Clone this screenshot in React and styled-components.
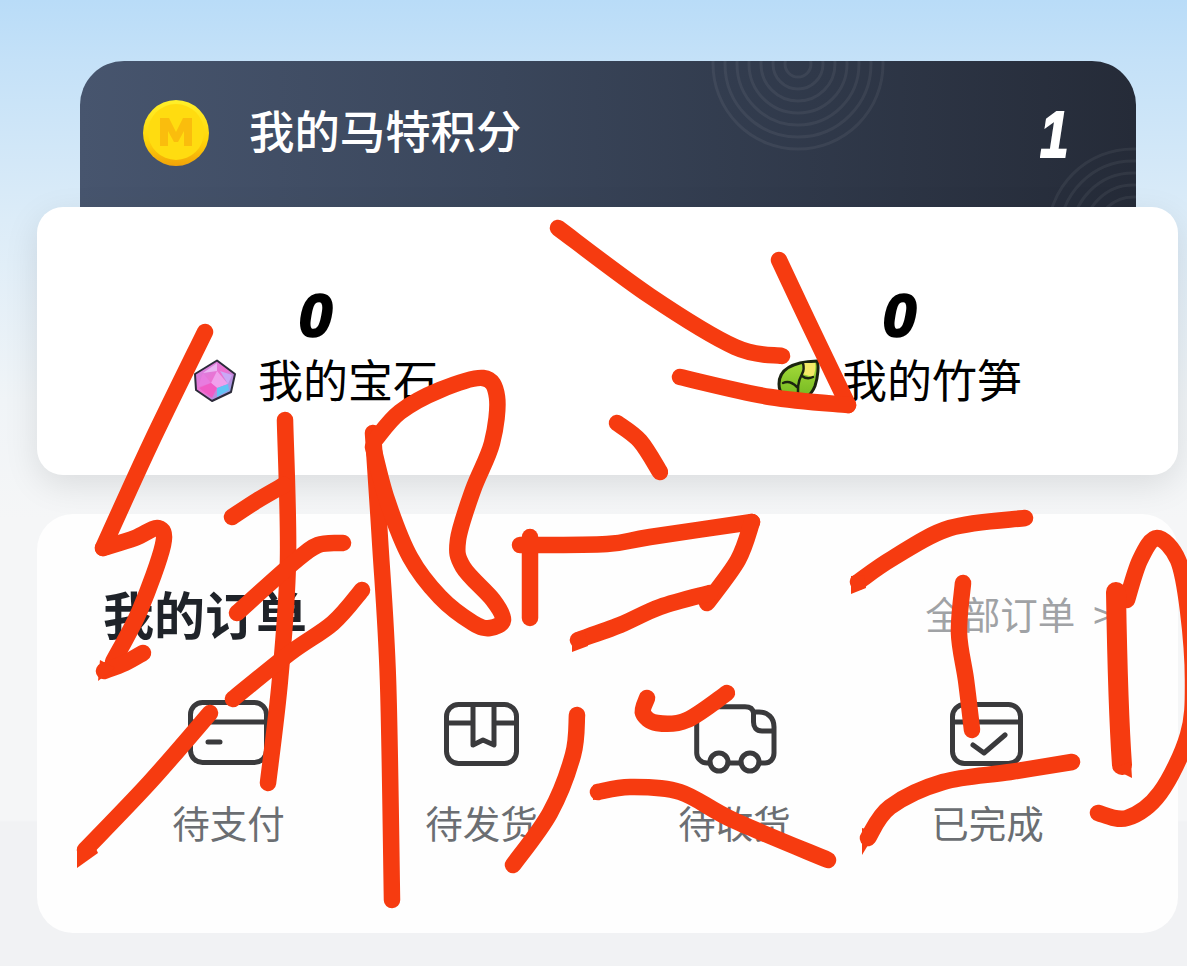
import React from "react";
import styled, { createGlobalStyle } from "styled-components";

const Global = createGlobalStyle`
  html, body { margin: 0; padding: 0; background: #f1f2f4; }
  * { box-sizing: border-box; }
`;

const Page = styled.div`
  position: relative;
  width: 1187px;
  height: 966px;
  overflow: hidden;
  padding-top: 61px;
  font-family: "Noto Sans CJK SC", "Liberation Sans", sans-serif;
  background: linear-gradient(
    180deg,
    #b9dcf8 0,
    #c4e1f8 60px,
    #dcecf8 220px,
    #f0f4f7 400px,
    #f5f6f7 520px,
    #f5f6f7 820px,
    #f1f2f4 822px
  );
`;

const PointsCard = styled.section`
  position: relative;
  display: flex;
  align-items: center;
  height: 146px;
  margin: 0 51px 0 80px;
  padding: 0 66px 14px 63px;
  border-radius: 44px 44px 0 0;
  overflow: hidden;
  background: linear-gradient(90deg, #47556e 0%, #3a465b 40%, #252b38 100%);
`;

const Rings = styled.svg`
  position: absolute;
  left: ${(p) => p.$left}px;
  top: ${(p) => p.$top}px;
  width: ${(p) => p.$size}px;
  height: ${(p) => p.$size}px;
`;

const CoinMark = styled.svg`
  flex: none;
  margin-top: 12px;
`;

const PointsTitle = styled.h2`
  flex: 1;
  margin: 3px 0 0 40px;
  font-size: 45.4px;
  line-height: 60px;
  font-weight: 500;
  color: #fff;
`;

const Score = styled.span`
  display: block;
  font-family: "Liberation Sans", sans-serif;
  font-style: italic;
  font-weight: 700;
  font-size: 60px;
  line-height: 66px;
  color: ${(p) => p.$color};
  -webkit-text-stroke: ${(p) => p.$stroke}px ${(p) => p.$color};
`;

const PointsScore = styled(Score)`
  font-size: 64px;
  margin: 15px 1px 0 0;
  transform: scaleX(0.8);
  transform-origin: right center;
`;

const StatsCard = styled.section`
  position: relative;
  z-index: 1;
  display: grid;
  grid-template-columns: 1fr 1fr;
  column-gap: 43px;
  height: 268px;
  margin: 0 9px 39px 37px;
  padding: 76px 8px 0;
  border-radius: 26px;
  background: #fff;
  box-shadow: 0 10px 34px rgba(0, 0, 0, 0.1);
`;

const Stat = styled.div`
  display: flex;
  flex-direction: column;
  align-items: center;
`;

const StatLabelRow = styled.div`
  display: flex;
  align-items: center;
  gap: 21px;
  margin-top: 4px;
`;

const StatIcon = styled.svg`
  flex: none;
`;

const StatLabel = styled.span`
  margin-top: -4px;
  font-size: 45px;
  line-height: 60px;
  color: #000;
`;

const OrdersCard = styled.section`
  position: relative;
  z-index: 2;
  height: 419px;
  margin: 0 9px 0 37px;
  padding: 65px 64px 0 65px;
  border-radius: 36px;
  background: #fefefe;
`;

const OrdersHeader = styled.header`
  display: flex;
  align-items: center;
  justify-content: space-between;
  height: 68px;
  padding-left: 1px;
`;

const OrdersTitle = styled.h3`
  margin: 0;
  font-size: 51px;
  line-height: 68px;
  font-weight: 700;
  color: #1f2329;
`;

const AllOrders = styled.span`
  font-size: 37.5px;
  line-height: 50px;
  color: #a0a2a5;
`;

const Chevron = styled.span`
  margin-left: 18px;
`;

const OrderGrid = styled.div`
  display: grid;
  grid-template-columns: repeat(4, 1fr);
  margin-top: 51px;
`;

const OrderItem = styled.div`
  display: flex;
  flex-direction: column;
  align-items: center;
  gap: 25px;
`;

const OrderIcon = styled.svg`
  display: block;
  width: 84px;
  height: 74px;
  overflow: visible;
  fill: none;
  stroke: #3a3a3c;
  stroke-width: 5;
  stroke-linecap: round;
  stroke-linejoin: round;
`;

const OrderLabel = styled.span`
  font-size: 37.5px;
  line-height: 50px;
  color: #6b6e72;
`;

const Scribble = styled.svg`
  position: absolute;
  z-index: 3;
  left: 0;
  top: 0;
  width: 1187px;
  height: 966px;
  pointer-events: none;
`;

const Ink = styled.path`
  fill: none;
  stroke: #f63b10;
  stroke-width: ${(p) => p.$w || 16.5}px;
  stroke-linecap: round;
  stroke-linejoin: round;
`;

const InkTip = styled.path`
  fill: #f63b10;
`;

const Coin = () => (
  <CoinMark width="66" height="66" viewBox="0 0 66 66">
    <defs>
      <linearGradient id="coinFill" x1="0" y1="0" x2="0" y2="1">
        <stop offset="0" stopColor="#fff02a" />
        <stop offset="0.6" stopColor="#ffd60a" />
        <stop offset="1" stopColor="#f2a308" />
      </linearGradient>
    </defs>
    <circle cx="33" cy="33" r="33" fill="url(#coinFill)" />
    <circle cx="33" cy="32" r="28" fill="#ffdc10" />
    <path d="M17 46V18h9l7 14 7-14h9v28h-8V31l-6 11h-4l-6-11v15z" fill="#f7a80c" opacity="0.6" />
  </CoinMark>
);

const Gem = () => (
  <StatIcon width="44" height="44" viewBox="0 0 44 44">
    <defs>
      <linearGradient id="gemFill" x1="0" y1="0" x2="1" y2="1">
        <stop offset="0" stopColor="#c78be8" />
        <stop offset="0.5" stopColor="#f06fd0" />
        <stop offset="1" stopColor="#5cc0f4" />
      </linearGradient>
    </defs>
    <path d="M24 1.5L42 15L38 33L19 42L3 31L2 15Z" fill="url(#gemFill)" stroke="#2c2a3a" strokeWidth="2" strokeLinejoin="round" />
    <path d="M24 4L10 14L24 12Z" fill="#e9b4f2" />
    <path d="M10 14L5 28L18 24Z" fill="#e87ce0" />
    <path d="M24 12L35 25L24 29L18 24Z" fill="#f0a0ec" />
    <path d="M35 25L39 16L27 12Z" fill="#c9a8f6" />
    <path d="M24 29L24 38L36 31L35 25Z" fill="#62c4f6" />
    <path d="M18 24L6 29L19 39L24 29Z" fill="#f05cc6" />
  </StatIcon>
);

const Leaf = () => (
  <StatIcon width="44" height="44" viewBox="0 0 44 44">
    <defs>
      <linearGradient id="leafFill" x1="0" y1="0" x2="0" y2="1">
        <stop offset="0" stopColor="#a6dc3a" />
        <stop offset="1" stopColor="#6fb51f" />
      </linearGradient>
    </defs>
    <path d="M2 25C2 11 14 3 40 2C42 6 41 18 38 27C34 37 26 42 19 42C9 42 2 35 2 25Z" fill="url(#leafFill)" stroke="#1b2410" strokeWidth="3" />
    <path d="M26 4L38 4C39 8 38 14 36 18L25 15Z" fill="#f4e968" />
    <path d="M22 41C20 32 20 24 25 15C27 12 27 8 26 4M20 28C15 23 10 22 6 24M25 17C29 20 32 20 36 18" fill="none" stroke="#1b2410" strokeWidth="2.5" strokeLinecap="round" />
  </StatIcon>
);

const ringRadii = [13, 25, 37, 49, 61, 73, 85];

const RingSet = ({ left, top, size }) => (
  <Rings $left={left} $top={top} $size={size} viewBox="-90 -90 180 180">
    {ringRadii.map((r) => (
      <circle key={r} r={r} fill="none" stroke="#ffffff" strokeOpacity="0.06" strokeWidth="3" />
    ))}
  </Rings>
);

const stats = [
  { label: "我的宝石", icon: <Gem /> },
  { label: "我的竹笋", icon: <Leaf /> },
];

const orders = [
  {
    label: "待支付",
    icon: (
      <>
        <rect x="3.5" y="4.5" width="76" height="60" rx="12" />
        <path d="M3.5 24H79.5M21 44H33" />
      </>
    ),
  },
  {
    label: "待发货",
    icon: (
      <>
        <rect x="6.5" y="6.5" width="70" height="59" rx="12" />
        <path d="M6.5 25H33M54 25H76.5M33 6.5V47L43 42L54 47V6.5" />
      </>
    ),
  },
  {
    label: "待收货",
    icon: (
      <>
        <path d="M17 65H14C8 65 3.7 60 3.7 55V18C3.7 12 8 8.7 14 8.7H52C57 8.7 60 11 60.5 15V24C60.5 29 63 33 69 33H80M62 14H66C75 14 81 20 81 29V55C81 61 77 65 72 65H66M35 65H48" />
        <circle cx="26" cy="64" r="9" />
        <circle cx="57" cy="64" r="9" />
      </>
    ),
  },
  {
    label: "已完成",
    icon: (
      <>
        <rect x="6.5" y="6.5" width="68" height="59" rx="12" />
        <path d="M6.5 24H74.5M27 47L38 55L59 37" />
      </>
    ),
  },
];

// Catmull-Rom through hand-traced points, so each pen stroke stays a smooth curve.
const smooth = (pts) => {
  let d = `M${pts[0][0]} ${pts[0][1]}`;
  for (let i = 0; i < pts.length - 1; i++) {
    const p0 = pts[i - 1] || pts[i];
    const p1 = pts[i];
    const p2 = pts[i + 1];
    const p3 = pts[i + 2] || p2;
    const c1x = p1[0] + (p2[0] - p0[0]) / 6;
    const c1y = p1[1] + (p2[1] - p0[1]) / 6;
    const c2x = p2[0] - (p3[0] - p1[0]) / 6;
    const c2y = p2[1] - (p3[1] - p1[1]) / 6;
    d += `C${c1x} ${c1y} ${c2x} ${c2y} ${p2[0]} ${p2[1]}`;
  }
  return d;
};

const penStrokes = [
  // arrow
  [[558, 228], [650, 296], [735, 347], [782, 356]],
  [[779, 260], [812, 330], [848, 405]],
  [[848, 405], [770, 397], [680, 377]],
  // left radical
  [[205, 332], [150, 445], [103, 548]],
  [[103, 548], [135, 538], [158, 528], [163, 545], [140, 610], [113, 662]],
  [[143, 653], [125, 663], [104, 671]],
  [[285, 420], [288, 560], [280, 680], [268, 783]],
  [[232, 517], [258, 500], [284, 485]],
  [[343, 543], [318, 545], [293, 563], [237, 613]],
  [[362, 590], [333, 623], [290, 653], [233, 699]],
  [[210, 713], [150, 782], [85, 850]],
  // right radical
  [[373, 433], [380, 540], [388, 680], [392, 900]],
  [[375, 440], [400, 412], [440, 390], [483, 378], [497, 397], [492, 443], [473, 490], [458, 540], [463, 567], [493, 600], [503, 620], [490, 628], [473, 623], [440, 597], [410, 557], [387, 500], [373, 447]],
  // second character
  [[617, 423], [640, 441], [660, 472]],
  [[530, 537], [530, 618]],
  [[520, 545], [607, 544], [650, 537], [752, 522]],
  [[752, 522], [738, 560], [707, 603]],
  [[710, 593], [660, 607], [620, 625], [578, 640]],
  [[577, 715], [573, 755], [550, 813], [513, 865]],
  [[647, 698], [643, 713], [657, 723], [687, 720], [727, 693]],
  [[598, 792], [630, 787], [680, 792], [733, 820], [828, 860]],
  // third character
  [[858, 582], [893, 558], [950, 528], [1025, 518]],
  [[963, 583], [959, 633], [966, 680], [972, 730]],
  [[868, 838], [890, 807], [943, 782], [1010, 772], [1072, 762]],
  [[1127, 600], [1140, 560], [1157, 538], [1178, 560], [1188, 610], [1193, 680], [1188, 735], [1160, 793], [1127, 818], [1098, 813]],
];

const Drawing = () => (
  <Scribble viewBox="0 0 1187 966">
    {penStrokes.map((pts) => (
      <Ink key={pts.join()} d={smooth(pts)} />
    ))}
    <Ink d="M1116 592C1117 650 1118 710 1122 765" $w={20} />
    <InkTip d="M98 681L100 660L115 668Z" />
    <InkTip d="M77 868V848L92 840L98 853Z" />
    <InkTip d="M572 652V637L585 632L588 646Z" />
    <InkTip d="M593 800V785L606 783L606 798Z" />
    <InkTip d="M851 594V576L864 575L866 588Z" />
    <InkTip d="M862 855V828L876 832Z" />
    <InkTip d="M1132 778L1112 768L1131 762Z" />
  </Scribble>
);

export default function App() {
  return (
    <Page>
      <Global />
      <PointsCard>
        <RingSet left={628} top={-87} size={180} />
        <RingSet left={963} top={83} size={180} />
        <Coin />
        <PointsTitle>我的马特积分</PointsTitle>
        <PointsScore $color="#fff" $stroke={2}>1</PointsScore>
      </PointsCard>
      <StatsCard>
        {stats.map((s) => (
          <Stat key={s.label}>
            <Score $color="#000" $stroke={2.5}>0</Score>
            <StatLabelRow>
              {s.icon}
              <StatLabel>{s.label}</StatLabel>
            </StatLabelRow>
          </Stat>
        ))}
      </StatsCard>
      <OrdersCard>
        <OrdersHeader>
          <OrdersTitle>我的订单</OrdersTitle>
          <AllOrders>
            全部订单<Chevron>&gt;</Chevron>
          </AllOrders>
        </OrdersHeader>
        <OrderGrid>
          {orders.map((o) => (
            <OrderItem key={o.label}>
              <OrderIcon viewBox="0 0 84 74">{o.icon}</OrderIcon>
              <OrderLabel>{o.label}</OrderLabel>
            </OrderItem>
          ))}
        </OrderGrid>
      </OrdersCard>
      <Drawing />
    </Page>
  );
}
